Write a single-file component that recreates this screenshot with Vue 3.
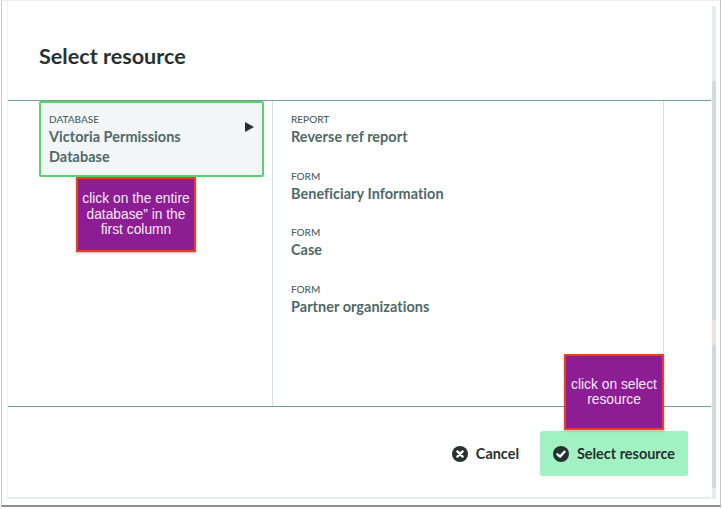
<template>
  <div class="screen">
    <div class="window">
      <div class="dialog">
        <h1 class="title">Select resource</h1>
        <div class="columns">
          <div class="col-left">
            <div class="db-card">
              <div class="db-text">
                <div class="kind">DATABASE</div>
                <div class="name">Victoria Permissions Database</div>
              </div>
              <svg class="arrow" width="9" height="10" viewBox="0 0 9 10"><path d="M0 0 L9 5 L0 10 Z" fill="#27312f" /></svg>
            </div>
          </div>
          <div class="col-right">
            <div v-for="item in items" :key="item.name" class="item">
              <div class="kind">{{ item.kind }}</div>
              <div class="name">{{ item.name }}</div>
            </div>
          </div>
          <div class="col-empty"></div>
        </div>
        <div class="footer">
          <button class="btn cancel">
            <svg width="16" height="16" viewBox="0 0 16 16"><circle cx="8" cy="8" r="8" fill="#27312f" /><path d="M5.4 5.4 L10.6 10.6 M10.6 5.4 L5.4 10.6" stroke="#fff" stroke-width="2.4" stroke-linecap="round" /></svg>
            Cancel
          </button>
          <button class="btn select">
            <svg width="16" height="16" viewBox="0 0 16 16"><circle cx="8" cy="8" r="8" fill="#27312f" /><path d="M4.5 8.3 L7 10.6 L11.5 5.8" fill="none" stroke="#fff" stroke-width="2.4" stroke-linecap="round" stroke-linejoin="round" /></svg>
            Select resource
          </button>
        </div>
      </div>
      <div class="scrollbar"></div>
      <div class="note note-db">click on the entire database” in the first column</div>
      <div class="note note-select">click on select resource</div>
    </div>
  </div>
</template>

<script setup>
const items = [
  { kind: 'REPORT', name: 'Reverse ref report' },
  { kind: 'FORM', name: 'Beneficiary Information' },
  { kind: 'FORM', name: 'Case' },
  { kind: 'FORM', name: 'Partner organizations' }
]
</script>

<style>
html, body { margin: 0; background: #fff; }
</style>

<style scoped>
.screen {
  width: 722px;
  height: 509px;
  padding: 0 1px 2px 1px;
  box-sizing: border-box;
  background: #fff;
  overflow: hidden;
}
.window {
  position: relative;
  height: 100%;
  box-sizing: border-box;
  padding: 0 9px 6px 5px;
  background: #fff;
  border-left: 1px solid #c9c9c9;
  border-top: 1px solid #ececec;
  border-right: 1px solid #c4c4c4;
  border-bottom: 2px solid #8f8f8f;
  display: flex;
}
.dialog {
  flex: 1;
  display: flex;
  flex-direction: column;
  background: #fff;
  border-left: 1px solid #eef2f1;
  border-bottom: 2px solid #e6ecea;
  font-family: Lato, "Liberation Sans", sans-serif;
  min-width: 0;
}
.title {
  margin: 0;
  height: 99px;
  box-sizing: border-box;
  padding: 42px 0 0 31px;
  font-size: 21.6px;
  line-height: 26px;
  font-weight: 700;
  color: #27312f;
}
.columns {
  height: 307px;
  flex: none;
  box-sizing: border-box;
  display: flex;
  border-top: 1px solid #6f9e98;
  border-bottom: 1px solid #6f9e98;
}
.col-left {
  width: 265px;
  box-sizing: border-box;
  padding-left: 31px;
  border-right: 1px solid #d5e3e0;
}
.db-card {
  width: 225px;
  height: 76px;
  box-sizing: border-box;
  padding: 9px 8px 0 8px;
  display: flex;
  align-items: flex-start;
  justify-content: space-between;
  background: #f2f6f6;
  border: 2px solid #5cd06f;
  border-radius: 2px;
}
.db-text { width: 170px; }
.arrow { margin-top: 10px; }
.col-right {
  width: 391px;
  box-sizing: border-box;
  padding: 11px 18px 0;
  border-right: 1px solid #d5e3e0;
}
.col-empty { flex: 1; }
.item { height: 56.7px; }
.kind {
  font-size: 10px;
  line-height: 14px;
  font-weight: 500;
  color: #4b605e;
}
.name {
  font-size: 14.45px;
  line-height: 20px;
  font-weight: 700;
  letter-spacing: 0.05px;
  color: #506866;
  margin-top: 1px;
}
.footer {
  flex: 1;
  display: flex;
  justify-content: flex-end;
  align-items: flex-start;
  padding: 24px 23px 0 0;
  gap: 21px;
}
.btn {
  display: flex;
  align-items: center;
  gap: 8px;
  height: 45px;
  border: 0;
  border-radius: 3px;
  background: transparent;
  color: #27312f;
  font-family: inherit;
  font-size: 14.45px;
  font-weight: 700;
  padding: 0;
}
.select {
  width: 148px;
  justify-content: center;
  background: #a1f1c3;
}
.scrollbar {
  position: absolute;
  right: 4px;
  top: 5px;
  bottom: 6px;
  width: 4px;
  background: linear-gradient(#e4eceb 0 75px, #cfdcda 75px 314px, #eedfe0 314px 339px, #cfdcda 339px 482px, #e4eceb 482px);
}
.note {
  position: absolute;
  box-sizing: border-box;
  display: flex;
  align-items: center;
  justify-content: center;
  text-align: center;
  background: #8c1d93;
  border: 2px solid #e8401f;
  color: #f6ecf7;
  font-family: "Liberation Sans", Arial, sans-serif;
  font-size: 13.8px;
  line-height: 15.5px;
  box-shadow: 0 1px 2px rgba(0, 0, 0, 0.3);
}
.note-db {
  left: 74px;
  top: 176px;
  width: 120px;
  height: 75px;
  padding: 0 4px;
}
.note-select {
  left: 562px;
  top: 353px;
  width: 100px;
  height: 76px;
  padding: 0 4px;
}
</style>
